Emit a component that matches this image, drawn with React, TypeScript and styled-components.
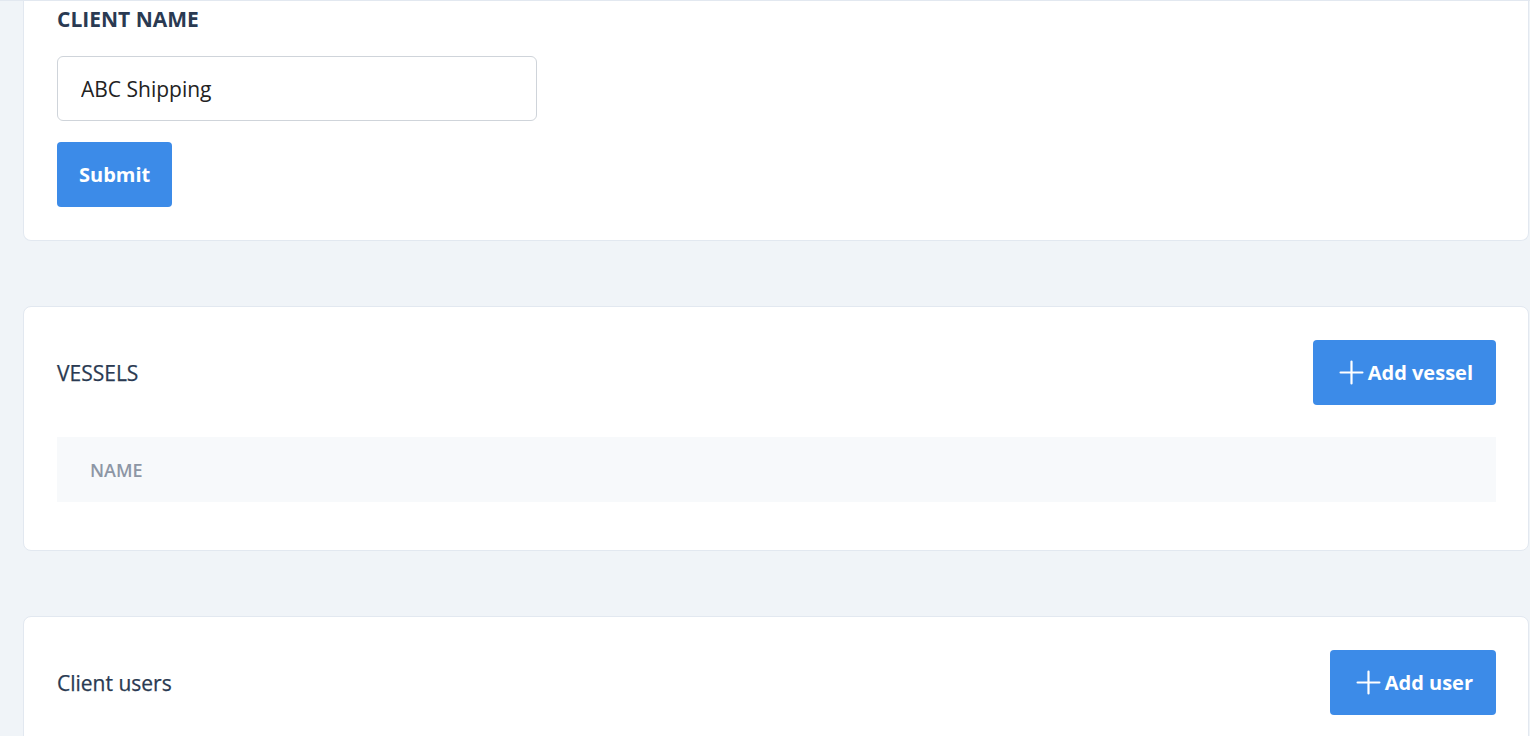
import styled, { createGlobalStyle } from 'styled-components';

const GlobalStyle = createGlobalStyle`
  html, body {
    margin: 0;
    padding: 0;
    background: #f0f4f8;
    overflow: hidden;
  }
  body {
    font-family: "Open Sans", "Noto Sans", sans-serif;
    color: #2d3748;
  }
  * { box-sizing: border-box; }
`;

const Page = styled.div`
  display: flex;
  flex-direction: column;
  gap: 65px;
  padding: 0 1px 0 23px;
  border-top: 1px solid #e2e8f0;
`;

const Card = styled.section<{ $top?: boolean }>`
  background: #fff;
  border: 1px solid #e2e8f0;
  border-top: ${(p) => (p.$top ? 'none' : '1px solid #e2e8f0')};
  border-radius: ${(p) => (p.$top ? '0 0 8px 8px' : '8px')};
  padding: ${(p) => (p.$top ? '2px 32px 33px 33px' : '33px 32px 48px 33px')};
`;

const FieldLabel = styled.label`
  display: block;
  font-size: 21px;
  font-weight: 700;
  line-height: 32px;
  margin-bottom: 21px;
  color: #2a3a52;
`;

const TextInput = styled.input`
  display: block;
  width: 480px;
  height: 65px;
  padding: 0 23px;
  border: 1px solid #cfd4da;
  border-radius: 6px;
  font-family: inherit;
  font-size: 21px;
  color: #222;
  outline: none;
  margin-bottom: 21px;
`;

const Button = styled.button<{ $icon?: boolean }>`
  display: inline-flex;
  align-items: center;
  gap: 4px;
  height: 65px;
  padding: ${(p) => (p.$icon ? '0 23px 0 26px' : '0 22px')};
  border: none;
  border-radius: 4px;
  background: #3c8be8;
  color: #fff;
  font-family: inherit;
  font-size: 20px;
  font-weight: 700;
  cursor: pointer;
  svg {
    flex: none;
  }
`;

const CardHeader = styled.div`
  display: flex;
  align-items: center;
  justify-content: space-between;
  margin-bottom: 32px;
`;

const Heading = styled.h2<{ $caps?: boolean }>`
  margin: 0;
  font-size: 21px;
  font-weight: 500;
  color: #2a3a52;
  -webkit-text-stroke: 0.25px #2a3a52;
  text-transform: ${(p) => (p.$caps ? 'uppercase' : 'none')};
`;

const TableHead = styled.div`
  display: flex;
  align-items: center;
  height: 65px;
  padding: 0 33px;
  background: #f7f9fb;
  font-size: 18px;
  font-weight: 600;
  color: #8d96a5;
  text-transform: uppercase;
`;

function Plus() {
  return (
    <svg width="25" height="25" viewBox="0 0 24 24" fill="none" stroke="currentColor" strokeWidth="2.1" strokeLinecap="round">
      <path d="M12 1.5v21M1.5 12h21" />
    </svg>
  );
}

export default function App() {
  return (
    <>
      <GlobalStyle />
      <Page>
        <Card $top>
          <FieldLabel htmlFor="client-name">CLIENT NAME</FieldLabel>
          <TextInput id="client-name" defaultValue="ABC Shipping" />
          <Button>Submit</Button>
        </Card>

        <Card>
          <CardHeader>
            <Heading $caps>Vessels</Heading>
            <Button $icon>
              <Plus />
              Add vessel
            </Button>
          </CardHeader>
          <TableHead>Name</TableHead>
        </Card>

        <Card>
          <CardHeader>
            <Heading>Client users</Heading>
            <Button $icon>
              <Plus />
              Add user
            </Button>
          </CardHeader>
        </Card>
      </Page>
    </>
  );
}
